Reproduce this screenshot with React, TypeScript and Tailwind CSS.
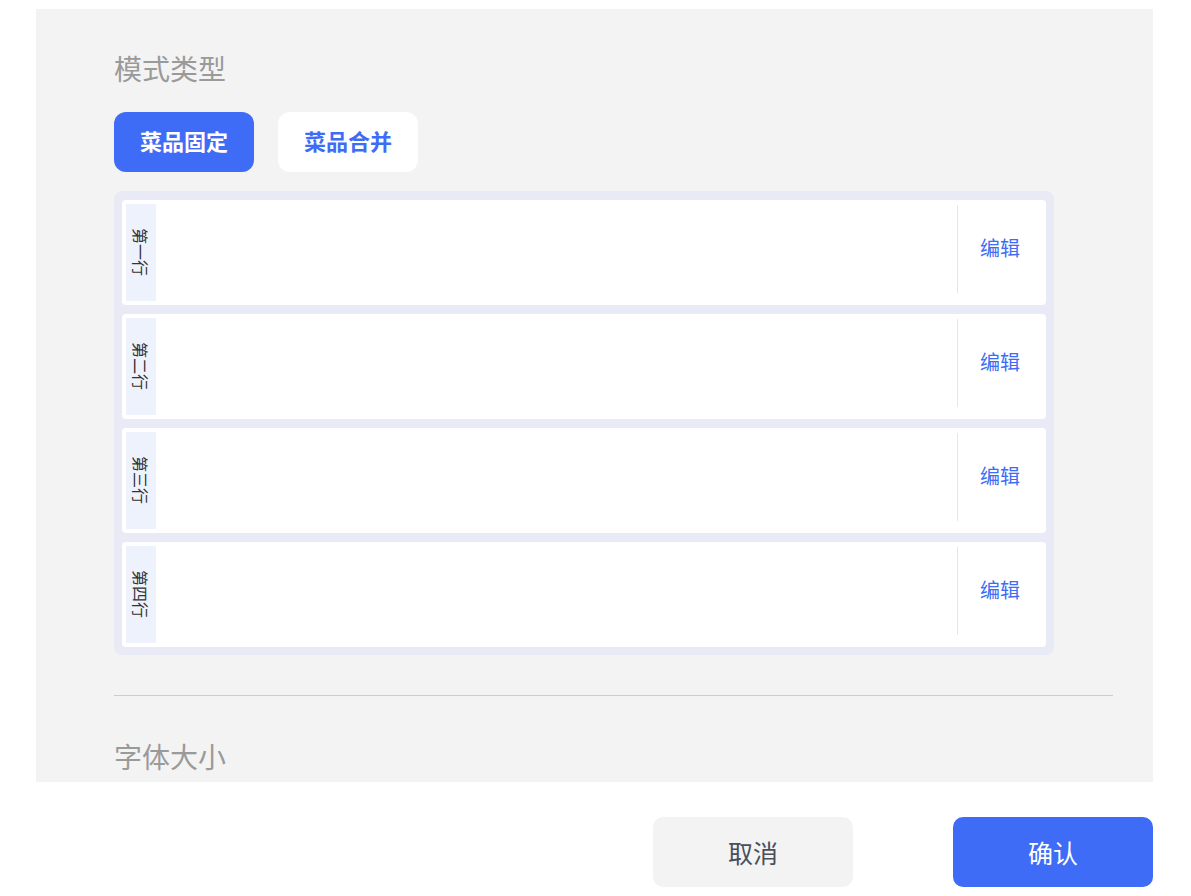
import React from "react";

const rows = ["第一行", "第二行", "第三行", "第四行"];

export default function App() {
  return (
    <div
      className="w-[1191px] h-[896px] bg-white relative overflow-hidden"
      style={{ fontFamily: '"PingFang SC", "Noto Sans CJK SC", "Noto Sans", sans-serif' }}
    >
      <div className="ml-[36px] mt-[9px] w-[1117px] h-[773px] bg-[#f3f3f3] pl-[78px] pr-[40px] pt-[44px] overflow-hidden">
        <div className="text-[28px] leading-[30px] text-[#9a9a9a]">模式类型</div>
        <div className="flex gap-[24px] mt-[29px]">
          <div className="w-[140px] h-[60px] rounded-[12px] bg-[#3e6cf6] text-white text-[22px] font-bold flex items-center justify-center pb-[3px]">
            菜品固定
          </div>
          <div className="w-[140px] h-[60px] rounded-[12px] bg-white text-[#3e6cf6] text-[22px] font-bold flex items-center justify-center pb-[3px]">
            菜品合并
          </div>
        </div>
        <div className="mt-[19px] w-[940px] bg-[#e8ebf5] rounded-[8px] pt-[9px] pb-[8px] px-[8px] flex flex-col gap-[9px]">
          {rows.map((r) => (
            <div key={r} className="h-[105px] bg-white rounded-[4px] flex items-stretch p-[4px]">
              <div className="w-[30px] bg-[#eef2fd] flex items-center justify-center">
                <span
                  className="text-[16px] leading-[16px] text-[#333]"
                  style={{ writingMode: "vertical-rl", textOrientation: "sideways" }}
                >
                  {r}
                </span>
              </div>
              <div className="flex-1" />
              <div className="flex items-center">
                <div className="w-px h-[88px] bg-[#e6e6e6] self-start mt-[1px]" />
              </div>
              <div className="w-[84px] flex items-center justify-center text-[20px] text-[#3e6cf6] pb-[10px]">
                编辑
              </div>
            </div>
          ))}
        </div>
        <div className="mt-[40px] h-px bg-[#cccccc] w-[999px]" />
        <div className="mt-[45px] text-[28px] leading-[30px] text-[#9a9a9a]">字体大小</div>
      </div>
      <div className="flex justify-end gap-[100px] pr-[38px] mt-[35px]">
        <div className="w-[200px] h-[70px] rounded-[10px] bg-[#f3f3f3] text-[#4a4f5c] text-[25px] flex items-center justify-center pt-[2px]">
          取消
        </div>
        <div className="w-[200px] h-[70px] rounded-[10px] bg-[#3e6cf6] text-white text-[25px] flex items-center justify-center pt-[2px]">
          确认
        </div>
      </div>
    </div>
  );
}
